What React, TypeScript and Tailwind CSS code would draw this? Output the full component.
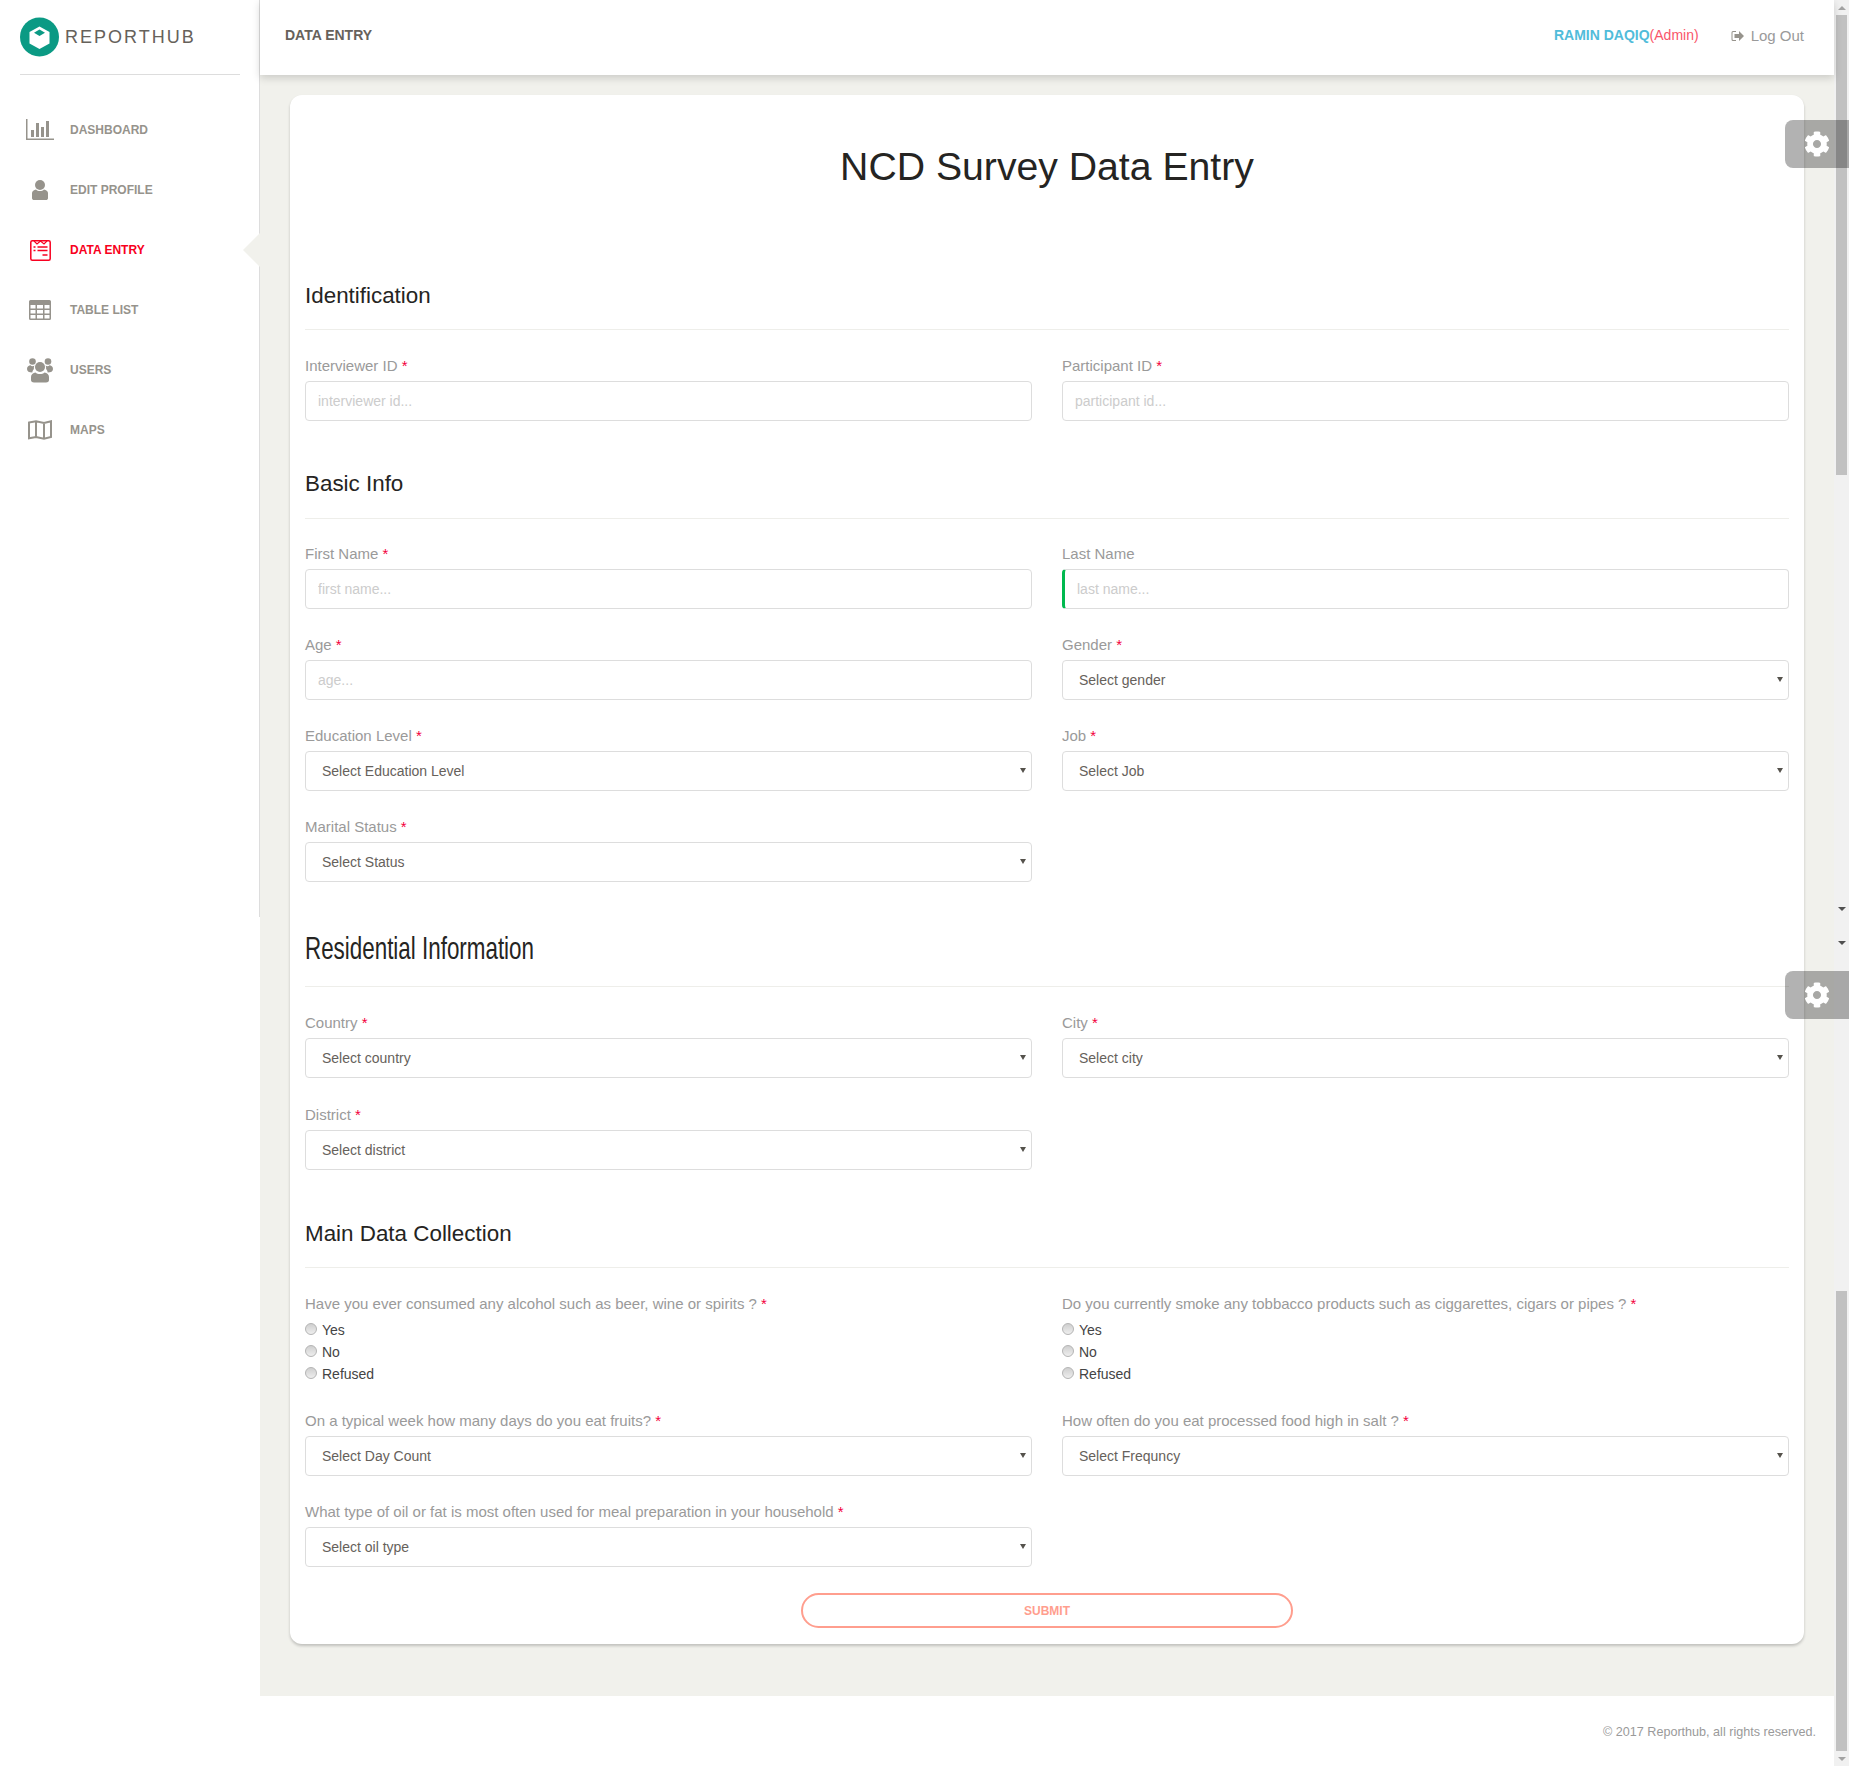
import { FaCog } from "react-icons/fa";

const GRAY = "#96938c";

function DashboardIcon() {
  return (
    <svg width="28" height="22" viewBox="0 0 28 22" fill={GRAY}>
      <path d="M0 0h1.500v19.500H28V21H0z" />
      <rect x="5" y="11" width="3" height="7" />
      <rect x="10" y="4" width="3" height="14" />
      <rect x="15" y="8" width="3" height="10" />
      <rect x="20" y="2" width="3" height="16" />
    </svg>
  );
}

function ProfileIcon() {
  return (
    <svg width="18" height="22" viewBox="0 0 18 22" fill={GRAY}>
      <circle cx="9" cy="6" r="5" />
      <path d="M1 14c0-2 2-3 4-3.500 1 1 2.500 1.500 4 1.500s3-.5 4-1.500c2 .5 4 1.500 4 3.500v5c0 1.500-1 2-2 2H3c-1 0-2-.5-2-2z" />
    </svg>
  );
}

function DataEntryIcon() {
  return (
    <svg width="21" height="21" viewBox="0 0 21 21" fill="none" stroke="#f80020" strokeWidth="1.500">
      <rect x="0.800" y="0.800" width="19.400" height="19.400" rx="1.500" />
      <path d="M4 1l3 3 3.500-3 3.500 3 3-3" strokeWidth="1.200" />
      <path d="M3.500 7h2M7.500 7h10M3.500 10.500h2M7.500 10.500h10M12.500 15h5" strokeWidth="1.600" />
    </svg>
  );
}

function TableIcon() {
  return (
    <svg width="22" height="20" viewBox="0 0 22 20" fill={GRAY}>
      <path
        fillRule="evenodd"
        d="M1.500 0h19A1.500 1.500 0 0 1 22 1.500v17a1.500 1.500 0 0 1-1.500 1.500h-19A1.500 1.500 0 0 1 0 18.500v-17A1.500 1.500 0 0 1 1.500 0zM1.500 5v3.500h5V5zm6.500 0v3.500h6V5zm7.500 0v3.500h5V5zM1.500 10v3.500h5V10zm6.500 0v3.500h6V10zm7.500 0v3.500h5V10zM1.500 15v3.500h5V15zm6.500 0v3.500h6V15zm7.500 0v3.500h5V15z"
      />
    </svg>
  );
}

function UsersIcon() {
  return (
    <svg width="26" height="25" viewBox="0 0 26 25" fill={GRAY}>
      <circle cx="5.500" cy="3.500" r="3.300" />
      <circle cx="21" cy="3.500" r="3.300" />
      <path d="M0 11c0-2.500 2-3.500 3.500-3.700.5.500 1.200.9 2 .9s1.500-.4 2-.7c-.6 1-.7 2-.6 3.500-.7.900-1.500 2-1.600 3.500C2 14.500 0 13.500 0 11zM26 11c0-2.500-2-3.500-3.500-3.700-.5.500-1.200.9-2 .9s-1.500-.4-2-.7c.6 1 .7 2 .6 3.500.7.900 1.500 2 1.600 3.500 3.300 0 5.300-1 5.300-3.500z" />
      <circle cx="13" cy="9" r="5" />
      <path d="M4 19c0-2.500 2-4 4.500-4.500 1 1 2.800 1.500 4.500 1.500s3.500-.5 4.500-1.500C20 15 22 16.500 22 19v3c0 1.500-1 2.500-3 2.500H7c-2 0-3-1-3-2.500z" />
    </svg>
  );
}

function MapsIcon() {
  return (
    <svg width="24" height="20" viewBox="0 0 24 20" fill="none" stroke={GRAY} strokeWidth="2">
      <path d="M1 2.500l7-1.200 8 1.700 7-1.700v15.700l-7 1.700-8-1.700-7 1.200zM8 1.300v15.700M16 3v15.700" />
    </svg>
  );
}

function Logo() {
  return (
    <svg width="39" height="40" viewBox="0 0 39 40">
      <circle cx="19.500" cy="20" r="19.500" fill="#0b9a84" />
      <path d="M19.500 9.500l10 5.500v11.500l-10 5.500-10-5.500V15z" fill="#fff" />
      <path d="M19.500 12.500l5.500 3.200-5.500 3.200-5.500-3.200z" fill="#0b9a84" />
    </svg>
  );
}

function LogoutIcon() {
  return (
    <svg width="13" height="12" viewBox="0 0 13 12" fill="#96938c">
      <path d="M5 1H2a1.500 1.500 0 0 0-1.500 1.500v7A1.500 1.500 0 0 0 2 11h3V10H2.200a.7.700 0 0 1-.7-.7V2.700a.7.700 0 0 1 .7-.7H5z" />
      <path d="M3.500 4h4.500V1l5 5-5 5V8H3.500z" />
    </svg>
  );
}

const navItems = [
  { label: "Dashboard", icon: <DashboardIcon /> },
  { label: "Edit Profile", icon: <ProfileIcon /> },
  { label: "Data Entry", icon: <DataEntryIcon />, active: true },
  { label: "Table List", icon: <TableIcon /> },
  { label: "Users", icon: <UsersIcon /> },
  { label: "Maps", icon: <MapsIcon /> },
];

function Sidebar() {
  return (
    <aside className="flex w-[260px] shrink-0 bg-white">
      <div className="w-[259px]">
        <div className="ml-[20px] mr-[19px] flex h-[75px] items-center gap-[6px] border-b border-[#ddd] pb-[1px]">
          <Logo />
          <span className="mt-[1px] text-[18px] tracking-[2px] text-[#66615b]">REPORTHUB</span>
        </div>
        <nav className="mt-[25px]">
          {navItems.map((item) => (
            <div key={item.label} className="relative flex h-[60px] items-center">
              <span className="flex w-[70px] justify-center pl-[10px]">
                <span className="flex w-[60px] justify-center">{item.icon}</span>
              </span>
              <span
                className={
                  item.active
                    ? "text-[12px] font-bold uppercase text-[#f80020]"
                    : "text-[12px] font-bold uppercase text-[#96938c]"
                }
              >
                {item.label}
              </span>
              {item.active && (
                <span className="absolute right-[-1px] top-[13px] h-0 w-0 border-y-[17px] border-r-[17px] border-y-transparent border-r-[#f1f1ec]" />
              )}
            </div>
          ))}
        </nav>
      </div>
      <div className="h-[917px] w-px bg-[#ddd]" />
    </aside>
  );
}

function Header() {
  return (
    <header className="relative flex h-[75px] items-center bg-white pb-[4px] pl-[25px] pr-[30px] shadow-[0_3px_8px_rgba(0,0,0,0.16)]">
      <span className="text-[14px] font-bold text-[#66615b]">DATA ENTRY</span>
      <span className="ml-auto text-[14px] font-bold text-[#51bcda]">
        RAMIN DAQIQ<span className="font-normal text-[#f9566a]">(Admin)</span>
      </span>
      <span className="ml-[32px] mt-[1px] flex items-center gap-[7px] text-[15px] text-[#9a9a9a]">
        <LogoutIcon />
        Log Out
      </span>
    </header>
  );
}

function Label({ text, required }: { text: string; required?: boolean }) {
  return (
    <label className="mb-[5px] block text-[15px] leading-[20px] text-[#9a9a9a]">
      {text}
      {required && <span className="text-[#f3003c]"> *</span>}
    </label>
  );
}

function TextField({ label, placeholder, required, success }: { label: string; placeholder: string; required?: boolean; success?: boolean }) {
  return (
    <div>
      <Label text={label} required={required} />
      <input
        placeholder={placeholder}
        className={
          success
            ? "block h-[40px] w-full rounded-[4px] border border-l-[3px] border-[#ddd] border-l-[#00b94f] bg-white pl-[12px] text-[14px] text-[#66615b] outline-none placeholder:text-[#ccc]"
            : "block h-[40px] w-full rounded-[4px] border border-[#ddd] bg-white pl-[12px] text-[14px] text-[#66615b] outline-none placeholder:text-[#ccc]"
        }
      />
    </div>
  );
}

function SelectField({ label, value }: { label: string; value: string }) {
  return (
    <div>
      <Label text={label} required />
      <div className="relative">
        <select className="block h-[40px] w-full appearance-none rounded-[4px] border border-[#ddd] bg-white pl-[16px] text-[14px] text-[#66615b] outline-none">
          <option>{value}</option>
        </select>
        <span className="pointer-events-none absolute right-[6px] top-[17px] h-0 w-0 border-x-[3px] border-t-[5px] border-x-transparent border-t-[#55524c]" />
      </div>
    </div>
  );
}

function RadioField({ label, name }: { label: string; name: string }) {
  return (
    <div>
      <Label text={label} required />
      {["Yes", "No", "Refused"].map((opt) => (
        <label key={opt} className="flex h-[22px] items-center pt-[1px] text-[14px] text-[#444]">
          <input
            type="radio"
            name={name}
            className="mb-[4px] mr-[5px] h-[12px] w-[12px] appearance-none rounded-full border border-[#b4b4b4] bg-linear-to-b from-[#cfcfcf] to-[#eeeeee]"
          />
          {opt}
        </label>
      ))}
    </div>
  );
}

function Section({
  title,
  className,
  headClass,
  titleClass,
  bodyClass,
  children,
}: {
  title: string;
  className: string;
  headClass?: string;
  titleClass?: string;
  bodyClass?: string;
  children: React.ReactNode;
}) {
  return (
    <section className={className}>
      <h3 className={`border-b border-[#eeeeea] text-[22.4px] leading-[28px] text-[#252422] ${headClass ?? "pb-[20px]"}`}>
        <span className={titleClass ?? "inline-block"}>{title}</span>
      </h3>
      <div className={`grid grid-cols-2 gap-x-[30px] ${bodyClass ?? "mt-[26px] gap-y-[26px]"}`}>{children}</div>
    </section>
  );
}

function Form() {
  return (
    <div className="mx-[30px] mt-[20px] rounded-[12px] bg-white px-[15px] pb-[16px] shadow-[0_2px_3px_rgba(0,0,0,0.2)]">
      <h1 className="pt-[50px] text-center text-[39.2px] leading-[44px] text-[#252422]">NCD Survey Data Entry</h1>

      <Section title="Identification" className="mt-[93px]" headClass="pb-[19px]">
        <TextField label="Interviewer ID" placeholder="interviewer id..." required />
        <TextField label="Participant ID" placeholder="participant id..." required />
      </Section>

      <Section title="Basic Info" className="mt-[49px]" bodyClass="mt-[25px] gap-y-[26px]">
        <TextField label="First Name" placeholder="first name..." required />
        <TextField label="Last Name" placeholder="last name..." success />
        <TextField label="Age" placeholder="age..." required />
        <SelectField label="Gender" value="Select gender" />
        <SelectField label="Education Level" value="Select Education Level" />
        <SelectField label="Job" value="Select Job" />
        <SelectField label="Marital Status" value="Select Status" />
      </Section>

      <Section
        title="Residential Information"
        className="mt-[53px]"
        headClass="pb-[23px]"
        titleClass="inline-block origin-center scale-y-[1.4]"
        bodyClass="mt-[26px] gap-y-[27px]"
      >
        <SelectField label="Country" value="Select country" />
        <SelectField label="City" value="Select city" />
        <SelectField label="District" value="Select district" />
      </Section>

      <Section title="Main Data Collection" className="mt-[50px]" headClass="pb-[19px]">
        <RadioField label="Have you ever consumed any alcohol such as beer, wine or spirits ?" name="alcohol" />
        <RadioField label="Do you currently smoke any tobbacco products such as ciggarettes, cigars or pipes ?" name="smoke" />
        <SelectField label="On a typical week how many days do you eat fruits?" value="Select Day Count" />
        <SelectField label="How often do you eat processed food high in salt ?" value="Select Frequncy" />
        <SelectField label="What type of oil or fat is most often used for meal preparation in your household" value="Select oil type" />
      </Section>

      <div className="mt-[26px] flex justify-center">
        <button className="h-[35px] w-[492px] rounded-[20px] border-2 border-[#ff9e8e] text-[12px] font-bold text-[#ff9e8e]">
          SUBMIT
        </button>
      </div>
    </div>
  );
}

function Scrollbar() {
  return (
    <div className="flex w-[15px] shrink-0 flex-col items-center bg-[#f1f1f1]">
      <span className="mt-[6px] h-0 w-0 border-x-[4px] border-b-[4px] border-x-transparent border-b-[#a3a3a3]" />
      <div className="mt-[5px] h-[460px] w-[11px] bg-[#c1c1c1]" />
      <span className="mt-[432px] h-0 w-0 border-x-[4px] border-t-[4px] border-x-transparent border-t-[#505050]" />
      <span className="mt-[30px] h-0 w-0 border-x-[4px] border-t-[4px] border-x-transparent border-t-[#505050]" />
      <div className="mt-[346px] h-[460px] w-[11px] bg-[#c1c1c1]" />
      <span className="mt-[6px] h-0 w-0 border-x-[4px] border-t-[4px] border-x-transparent border-t-[#a3a3a3]" />
    </div>
  );
}

function GearTab({ top }: { top: string }) {
  return (
    <div className={`absolute right-0 flex h-[48px] w-[64px] items-center rounded-l-[8px] bg-black/30 pl-[19px] ${top}`}>
      <FaCog className="text-[26px] text-white" />
    </div>
  );
}

export default function App() {
  return (
    <div className="relative flex h-[1766px] w-[1849px] overflow-hidden bg-white font-['Liberation_Sans',Arial,sans-serif]">
      <Sidebar />
      <div className="flex min-w-0 flex-1 flex-col">
        <main className="h-[1696px] bg-[#f1f1ec]">
          <Header />
          <Form />
        </main>
        <footer className="flex flex-1 justify-end bg-white pr-[18px] pt-[28px] text-[12.6px] leading-[16px] text-[#9a9a9a]">
          © 2017 Reporthub, all rights reserved.
        </footer>
      </div>
      <Scrollbar />
      <GearTab top="top-[120px]" />
      <GearTab top="top-[971px]" />
    </div>
  );
}
